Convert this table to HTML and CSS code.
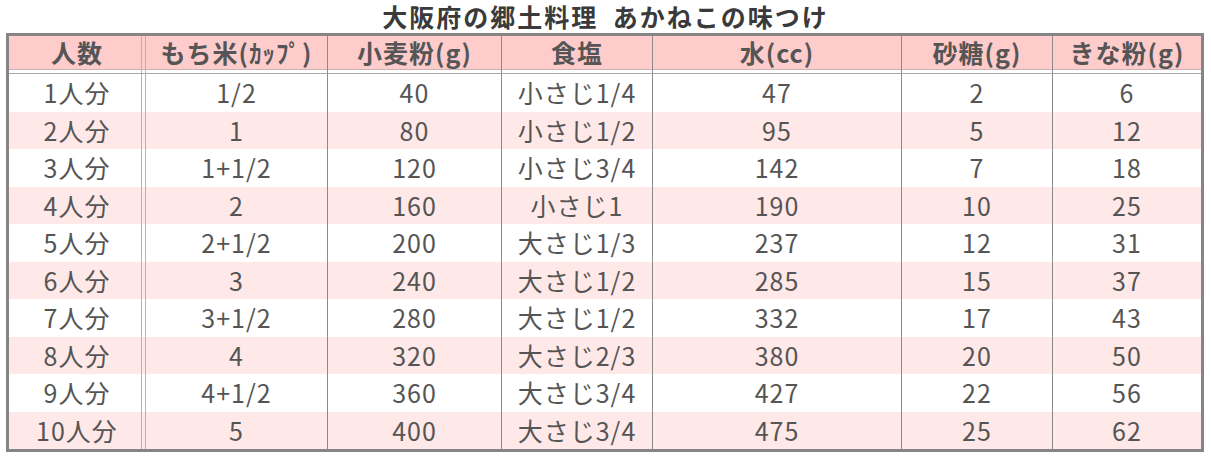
FILE: index.html
```html
<!DOCTYPE html>
<html lang="ja">
<head>
<meta charset="utf-8">
<title>大阪府の郷土料理 あかねこの味つけ</title>
<link rel="stylesheet" href="styles.css">
</head>
<body>
<h1 class="title">大阪府の郷土料理&ensp;あかねこの味つけ</h1>
<table class="recipe">
  <thead>
    <tr>
      <th class="c1">人数</th>
      <th class="c2">もち米(ｶｯﾌﾟ)</th>
      <th class="c3">小麦粉(g)</th>
      <th class="c4">食塩</th>
      <th class="c5">水(cc)</th>
      <th class="c6">砂糖(g)</th>
      <th class="c7">きな粉(g)</th>
    </tr>
  </thead>
  <tbody>
    <tr><td class="c1">1人分</td><td class="c2">1/2</td><td class="c3">40</td><td class="c4">小さじ1/4</td><td class="c5">47</td><td class="c6">2</td><td class="c7">6</td></tr>
    <tr><td class="c1">2人分</td><td class="c2">1</td><td class="c3">80</td><td class="c4">小さじ1/2</td><td class="c5">95</td><td class="c6">5</td><td class="c7">12</td></tr>
    <tr><td class="c1">3人分</td><td class="c2">1+1/2</td><td class="c3">120</td><td class="c4">小さじ3/4</td><td class="c5">142</td><td class="c6">7</td><td class="c7">18</td></tr>
    <tr><td class="c1">4人分</td><td class="c2">2</td><td class="c3">160</td><td class="c4">小さじ1</td><td class="c5">190</td><td class="c6">10</td><td class="c7">25</td></tr>
    <tr><td class="c1">5人分</td><td class="c2">2+1/2</td><td class="c3">200</td><td class="c4">大さじ1/3</td><td class="c5">237</td><td class="c6">12</td><td class="c7">31</td></tr>
    <tr><td class="c1">6人分</td><td class="c2">3</td><td class="c3">240</td><td class="c4">大さじ1/2</td><td class="c5">285</td><td class="c6">15</td><td class="c7">37</td></tr>
    <tr><td class="c1">7人分</td><td class="c2">3+1/2</td><td class="c3">280</td><td class="c4">大さじ1/2</td><td class="c5">332</td><td class="c6">17</td><td class="c7">43</td></tr>
    <tr><td class="c1">8人分</td><td class="c2">4</td><td class="c3">320</td><td class="c4">大さじ2/3</td><td class="c5">380</td><td class="c6">20</td><td class="c7">50</td></tr>
    <tr><td class="c1">9人分</td><td class="c2">4+1/2</td><td class="c3">360</td><td class="c4">大さじ3/4</td><td class="c5">427</td><td class="c6">22</td><td class="c7">56</td></tr>
    <tr><td class="c1">10人分</td><td class="c2">5</td><td class="c3">400</td><td class="c4">大さじ3/4</td><td class="c5">475</td><td class="c6">25</td><td class="c7">62</td></tr>
  </tbody>
</table>
</body>
</html>
```
FILE: styles.css
```css
* { box-sizing: border-box; }
html, body { margin: 0; padding: 0; background: #ffffff; }
body {
  width: 1211px;
  font-family: "Noto Sans CJK JP", "Noto Sans", sans-serif;
  color: #555555;
}
.title {
  margin: 0;
  height: 33px;
  line-height: 33px;
  text-align: center;
  font-size: 25px;
  font-weight: 700;
  letter-spacing: 2px;
  color: #3a3a3a;
}
.recipe {
  margin-left: 6px;
  width: 1198px;
  table-layout: fixed;
  border-collapse: separate;
  border-spacing: 0;
  border: 3px solid #858585;
}
.recipe th, .recipe td {
  padding: 0;
  text-align: center;
  vertical-align: middle;
  font-size: 25px;
  letter-spacing: 1px;
  line-height: 1;
  white-space: nowrap;
  border-right: 1px solid #8a8a8a;
}
.recipe th {
  height: 38px;
  padding-bottom: 4px;
  font-weight: 700;
  color: #555555;
  border-bottom: 1px solid #a8a8a8;
  background-color: #ffffff;
  background-image: linear-gradient(to bottom, #ffcccc 0, #ffcccc 33px, #c9b4b4 33px, #c9b4b4 34px, #ffffff 34px);
}
.recipe td {
  height: 37.5px;
  font-weight: 400;
  background-color: #ffffff;
}
.recipe tbody tr:nth-child(even) td { background-color: #ffe8e8; }
.recipe .c1 {
  width: 137px;
  border-right: 1px solid #b4b4b4;
}
.recipe td.c1 {
  background-image: linear-gradient(to left, transparent 3px, #b4b4b4 3px, #b4b4b4 4px, transparent 4px);
}
.recipe th.c1 {
  background-image:
    linear-gradient(to left, transparent 3px, #b4b4b4 3px, #b4b4b4 4px, transparent 4px),
    linear-gradient(to bottom, #ffcccc 0, #ffcccc 33px, #c9b4b4 33px, #c9b4b4 34px, #ffffff 34px);
}
.recipe .c2 { width: 182px; }
.recipe .c3 { width: 174px; }
.recipe .c4 { width: 151px; }
.recipe .c5 { width: 249px; }
.recipe .c6 { width: 151px; }
.recipe .c7 { width: 148px; border-right: none; }
```
